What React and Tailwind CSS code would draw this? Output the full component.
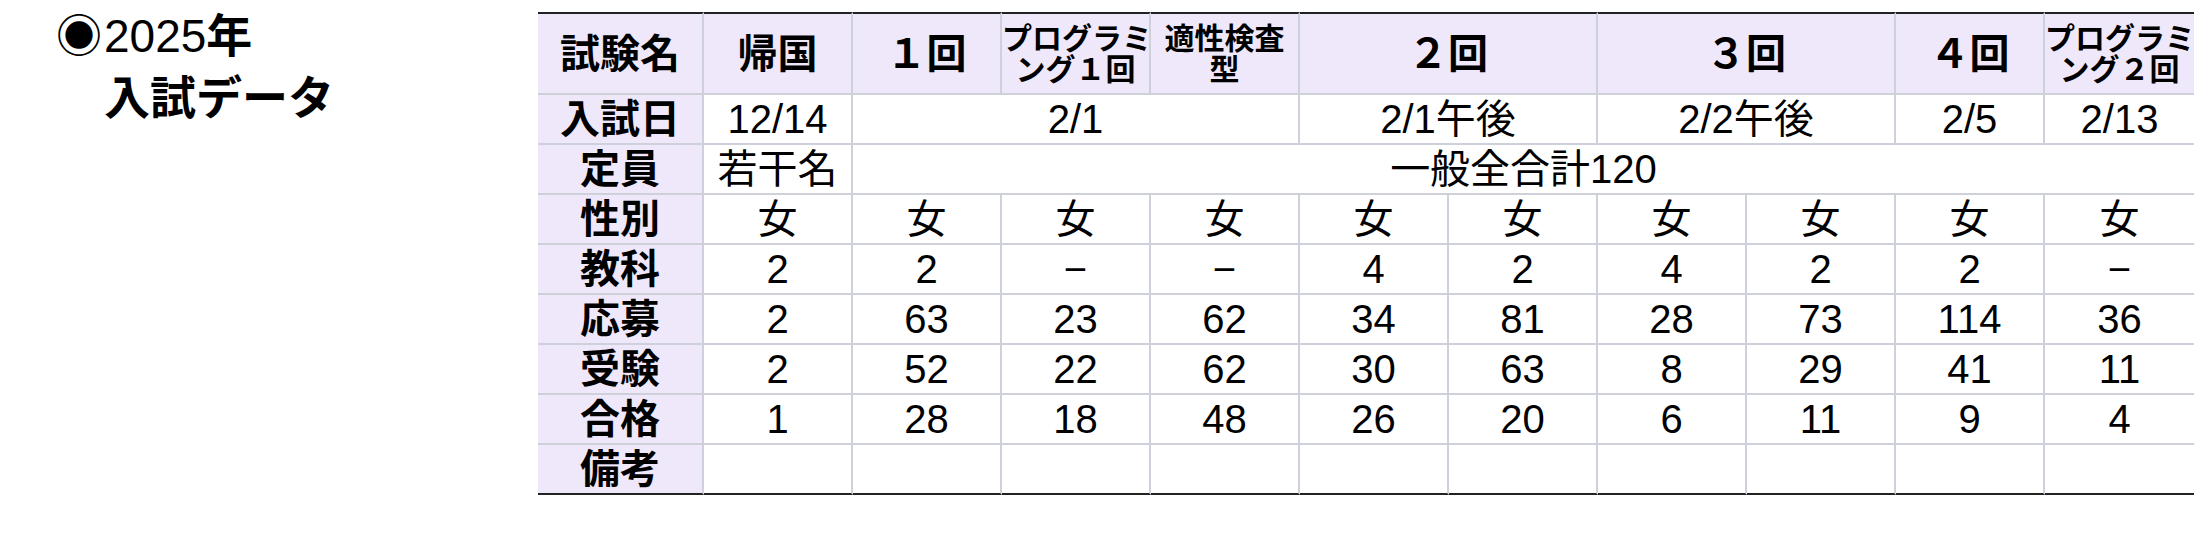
const headers = [
  { label: '帰国', span: 1 },
  { label: '１回', span: 1 },
  { label: ['プログラミ', 'ング１回'], span: 1 },
  { label: ['適性検査', '型'], span: 1 },
  { label: '２回', span: 2 },
  { label: '３回', span: 2 },
  { label: '４回', span: 1 },
  { label: ['プログラミ', 'ング２回'], span: 1 },
];

const dates = [
  { text: '12/14', span: 1 },
  { text: '2/1', span: 3 },
  { text: '2/1午後', span: 2 },
  { text: '2/2午後', span: 2 },
  { text: '2/5', span: 1 },
  { text: '2/13', span: 1 },
];

const rows = [
  ['性別', ['女', '女', '女', '女', '女', '女', '女', '女', '女', '女']],
  ['教科', ['2', '2', '−', '−', '4', '2', '4', '2', '2', '−']],
  ['応募', ['2', '63', '23', '62', '34', '81', '28', '73', '114', '36']],
  ['受験', ['2', '52', '22', '62', '30', '63', '8', '29', '41', '11']],
  ['合格', ['1', '28', '18', '48', '26', '20', '6', '11', '9', '4']],
];

const cell =
  'h-[50px] p-0 border-b-2 border-r-2 border-[#cfd1da] last:border-r-0 text-center align-middle text-[40px] leading-[40px] whitespace-nowrap';
const label = 'bg-[#efe8fa] font-bold';

export default function App() {
  return (
    <div className="flex h-[560px] w-full bg-white text-black font-['Liberation_Sans','Noto_Sans_CJK_JP',sans-serif]">
      {/* Title */}
      <div className="w-[538px] shrink-0 pl-[56px] pt-[5px] text-[46px] leading-[62px]">
        <div className="flex">
          <span className="w-[48px]">◉</span>
          <span>2025</span>
          <span className="font-bold">年</span>
        </div>
        <div className="pl-[48px] font-bold">入試データ</div>
      </div>

      {/* Table */}
      <div className="pt-[12px]">
        <table className="w-[1656px] table-fixed border-separate border-spacing-0">
          <colgroup>
            <col className="w-[166px]" />
            {Array.from({ length: 10 }).map((_, i) => (
              <col key={i} className="w-[149px]" />
            ))}
          </colgroup>
          <thead>
            <tr>
              <th className={`${cell} ${label} h-[83px] border-t-2 border-t-[#222]`}>試験名</th>
              {headers.map((h, i) => (
                <th
                  key={i}
                  colSpan={h.span}
                  className={`${cell} ${label} h-[83px] border-t-2 border-t-[#222]`}
                >
                  {Array.isArray(h.label) ? (
                    <div className="text-[30px] leading-[31px]">
                      {h.label[0]}
                      <br />
                      {h.label[1]}
                    </div>
                  ) : (
                    h.label
                  )}
                </th>
              ))}
            </tr>
          </thead>
          <tbody>
            <tr>
              <td className={`${cell} ${label}`}>入試日</td>
              {dates.map((d, i) => (
                <td key={i} colSpan={d.span} className={cell}>
                  {d.text}
                </td>
              ))}
            </tr>
            <tr>
              <td className={`${cell} ${label}`}>定員</td>
              <td className={cell}>若干名</td>
              <td colSpan={9} className={cell}>
                一般全合計120
              </td>
            </tr>
            {rows.map(([name, vals]) => (
              <tr key={name}>
                <td className={`${cell} ${label}`}>{name}</td>
                {vals.map((v, i) => (
                  <td key={i} className={cell}>
                    {v}
                  </td>
                ))}
              </tr>
            ))}
            <tr>
              <td className={`${cell} ${label} border-b-[#222]`}>備考</td>
              {Array.from({ length: 10 }).map((_, i) => (
                <td key={i} className={`${cell} border-b-[#222]`}></td>
              ))}
            </tr>
          </tbody>
        </table>
      </div>
    </div>
  );
}
